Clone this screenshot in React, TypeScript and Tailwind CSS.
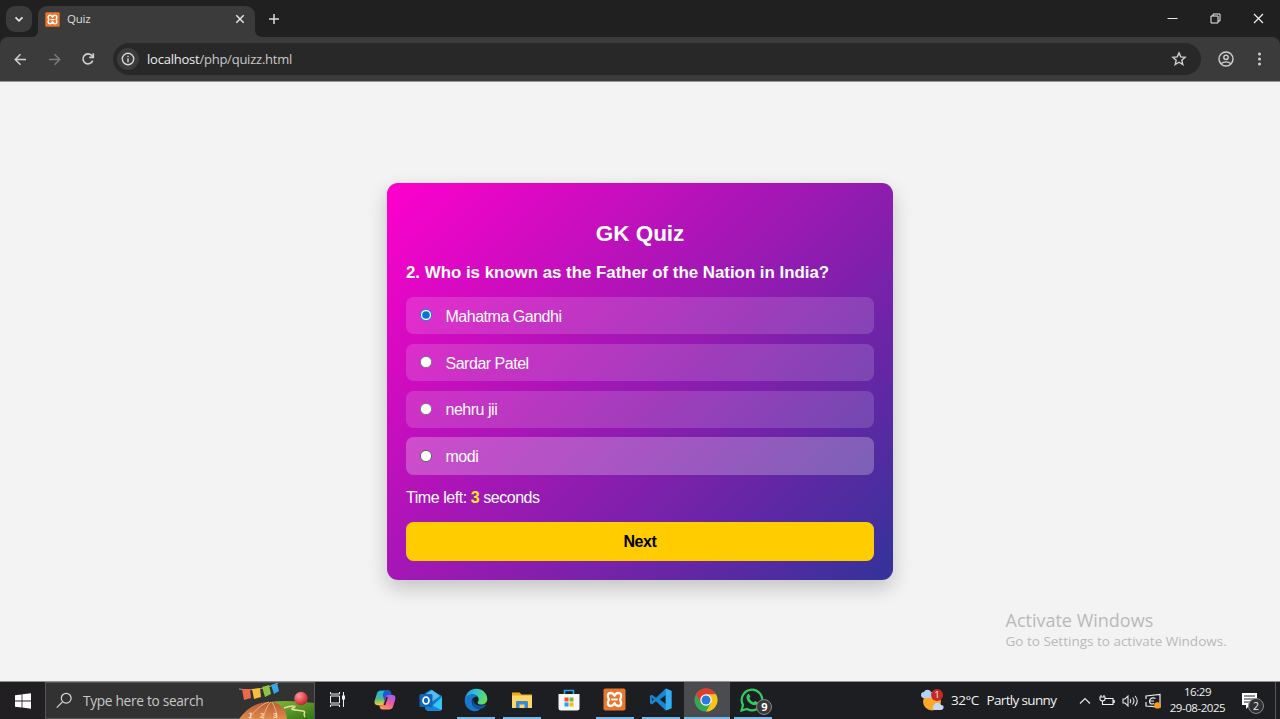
import React from "react";

const options = [
  { label: "Mahatma Gandhi", checked: true, hover: false },
  { label: "Sardar Patel", checked: false, hover: false },
  { label: "nehru jii", checked: false, hover: false },
  { label: "modi", checked: false, hover: true },
];

function Radio({ checked, hover }: { checked: boolean; hover: boolean }) {
  return (
    <svg className="-mt-px size-[14px] shrink-0" viewBox="0 0 14 14">
      {checked ? (
        <>
          <circle cx="7" cy="7" r="5.6" fill="#fff" stroke="#1c7fe0" strokeWidth="1" />
          <circle cx="7" cy="7" r="3.8" fill="#0075d8" />
        </>
      ) : (
        <circle cx="7" cy="7" r="5.6" fill="#fff" stroke={hover ? "#5a5a5a" : "#7c7480"} strokeWidth="0.9" />
      )}
    </svg>
  );
}

function Xampp({ className }: { className: string }) {
  return (
    <svg className={className} viewBox="0 0 24 24">
      <rect x="0.5" y="0.5" width="23" height="23" rx="2" fill="#e9762b" />
      <path
        d="M12 8.200C11 5.800 9.500 5.200 8 5.200 5 5.200 4 8 6.200 12 4 16 5 18.800 8 18.800c1.500 0 3-.6 4-3 1 2.400 2.500 3 4 3 3 0 4-2.800 1.800-6.800C20 8 19 5.200 16 5.200c-1.500 0-3 .6-4 3z"
        fill="none"
        stroke="#fff"
        strokeWidth="2.400"
        strokeLinejoin="round"
      />
      <path d="M9.500 12h5" stroke="#fff" strokeWidth="2" strokeLinecap="round" />
    </svg>
  );
}

function TabStrip() {
  return (
    <header className="flex h-[37px] bg-[#202020] text-[#dedede]">
      <div className="ml-[6px] mt-[6px] flex size-[26px] items-center justify-center rounded-[9px] bg-[#3b3b3b]">
        <svg className="size-[10px]" viewBox="0 0 10 10" fill="none" stroke="#e4e4e4" strokeWidth="1.7">
          <path d="M1.5 3.300 5 6.800 8.500 3.300" />
        </svg>
      </div>
      <div className="flex w-[234px]">
        <div className="w-[6px] self-end overflow-hidden bg-[#3b3b3b]">
          <div className="h-[8px] rounded-br-[7px] bg-[#202020]" />
        </div>
        <div className="mt-[6px] flex w-[217px] items-center rounded-t-[9px] bg-[#3b3b3b] pb-[5px] pl-[7px]">
          <Xampp className="size-[15px]" />
          <span className="ml-[7px] font-['Open_Sans',sans-serif] text-[11.5px] leading-[16px] tracking-[-0.2px]">Quiz</span>
          <svg className="ml-auto mr-[10px] size-[10px]" viewBox="0 0 10 10" fill="none" stroke="#e4e4e4" strokeWidth="1.500">
            <path d="M1.300 1.300l7.400 7.400M8.700 1.300 1.300 8.700" />
          </svg>
        </div>
        <div className="w-[8px] self-end bg-[#3b3b3b]">
          <div className="h-[8px] rounded-bl-[7px] bg-[#202020]" />
        </div>
      </div>
      <svg className="ml-[2px] mt-[13px] size-[12px]" viewBox="0 0 12 12" fill="none" stroke="#dcdcdc" strokeWidth="1.500">
        <path d="M6 1v10M1 6h10" />
      </svg>
      <div className="ml-auto mr-[16px] flex items-center gap-[32px]">
        <svg className="size-[11px]" viewBox="0 0 11 11" stroke="#e6e6e6">
          <path d="M.5 5.500h10" />
        </svg>
        <svg className="size-[11px]" viewBox="0 0 11 11" fill="none" stroke="#f0f0f0">
          <path d="M1 3h7v7H1zM3 3V1h7v7H8" />
        </svg>
        <svg className="size-[11px]" viewBox="0 0 11 11" stroke="#f0f0f0" strokeWidth="1.200">
          <path d="M1 1l9 9M10 1l-9 9" />
        </svg>
      </div>
    </header>
  );
}

function Toolbar() {
  return (
    <div className="bg-[#202020]">
      <div className="flex h-[44px] items-center rounded-t-[8px] bg-[#3b3b3b]">
        <svg className="ml-[14px] size-[13px]" viewBox="0 0 13 13" fill="none" stroke="#d2d2d2" strokeWidth="1.500">
          <path d="M12 6.500H1.500M6.500 1.300 1.300 6.500l5.200 5.200" />
        </svg>
        <svg className="ml-[21px] size-[13px]" viewBox="0 0 13 13" fill="none" stroke="#7b7b7b" strokeWidth="1.500">
          <path d="M1 6.500h10.500M6.500 1.300l5.200 5.200-5.200 5.200" />
        </svg>
        <svg className="ml-[20px] size-[14px]" viewBox="0 0 14 14" fill="none" stroke="#d2d2d2" strokeWidth="1.600">
          <path d="M11.700 8.600A5 5 0 1 1 10.800 3.600L12.300 5" />
          <path d="M12.300 1.200v4.200H8.200" />
        </svg>
        <div className="ml-[18px] flex h-[32px] w-[1088px] items-center rounded-full bg-[#282828]">
          <div className="ml-[4px] flex size-[22px] items-center justify-center rounded-full bg-[#3c3c3c]">
            <svg className="size-[14px]" viewBox="0 0 14 14" fill="none" stroke="#d8d8d8" strokeWidth="1.400">
              <circle cx="7" cy="7" r="5.700" />
              <path d="M7 6.300v3.900M7 3.700v1.400" />
            </svg>
          </div>
          <span className="ml-[8px] whitespace-nowrap font-['Open_Sans',sans-serif] text-[13px] leading-[18px] tracking-[-0.23px] text-[#c9c9c9]">
            <span className="text-[#ececec]">localhost</span>/php/quizz.html
          </span>
          <svg className="ml-auto mr-[14px] size-[16px]" viewBox="0 0 16 16" fill="none" stroke="#cfcfcf" strokeWidth="1.400">
            <path d="M8 1.900l1.800 4 4.300.4-3.300 2.900 1 4.300L8 11.200l-3.800 2.300 1-4.300L1.900 6.300l4.300-.4z" />
          </svg>
        </div>
        <svg className="ml-[17px] size-[16px]" viewBox="0 0 16 16" fill="none" stroke="#cfcfcf" strokeWidth="1.400">
          <circle cx="8" cy="8" r="7" />
          <circle cx="8" cy="6.300" r="2.200" />
          <path d="M3 12.700c2.900-2.500 7.100-2.500 10 0" />
        </svg>
        <svg className="ml-[17px] size-[16px]" viewBox="0 0 16 16" fill="#cfcfcf">
          <circle cx="8.500" cy="3" r="1.500" />
          <circle cx="8.500" cy="8" r="1.500" />
          <circle cx="8.500" cy="13" r="1.500" />
        </svg>
      </div>
    </div>
  );
}

function Quiz() {
  return (
    <section className="h-[396.500px] w-[506px] rounded-[11px] bg-[linear-gradient(135deg,#ff00cc,#333399)] px-[19px] pt-[36.400px] font-['Liberation_Sans',Arial,sans-serif] text-white shadow-[0_8px_20px_rgba(0,0,0,0.2)]">
      <h2 className="text-center text-[22.500px] font-bold leading-[27px]">GK Quiz</h2>
      <h3 className="mt-[15.600px] whitespace-nowrap text-[16.900px] font-bold leading-[22px] tracking-[-0.02px]">
        2. Who is known as the Father of the Nation in India?
      </h3>
      <div className="mt-[12.800px] flex flex-col gap-[9.400px]">
        {options.map((o) => (
          <label
            key={o.label}
            className={`flex h-[37.400px] items-center rounded-[7.500px] pl-[13px] ${o.hover ? "bg-white/25" : "bg-white/15"}`}
          >
            <Radio checked={o.checked} hover={o.hover} />
            <span className="ml-[12.500px] mt-[2px] text-[16px] leading-[20px] tracking-[-0.48px]">{o.label}</span>
          </label>
        ))}
      </div>
      <p className="mt-[13.500px] text-[16px] leading-[20px] tracking-[-0.45px]">
        Time left: <b className="text-[#ffee22]">3</b> seconds
      </p>
      <button className="mt-[13.500px] block h-[39.500px] w-full rounded-[7.500px] bg-[#ffcc00] text-[16px] font-bold tracking-[-0.4px] text-black">
        Next
      </button>
    </section>
  );
}

function TaskButton({ children, open, active }: { children: React.ReactNode; open?: boolean; active?: boolean }) {
  return (
    <div className={`flex h-full w-[46.100px] shrink-0 flex-col items-center ${active ? "bg-[#4a4c4f]" : ""}`}>
      <div className="flex h-[35px] items-center">{children}</div>
      {(open || active) && <div className={`h-[2px] bg-[#76b9ed] ${active ? "w-full" : "w-[38px]"}`} />}
    </div>
  );
}

function SearchArt() {
  return (
    <svg className="ml-auto h-[36px] w-[75px] shrink-0" viewBox="0 0 75 36">
      <defs>
        <linearGradient id="track" x1="0" y1="0" x2="0" y2="1">
          <stop offset="0" stopColor="#b85b32" />
          <stop offset="1" stopColor="#e08a4c" />
        </linearGradient>
        <radialGradient id="ball" cx=".35" cy=".3" r=".8">
          <stop offset="0" stopColor="#ff9a96" />
          <stop offset=".6" stopColor="#e04450" />
          <stop offset="1" stopColor="#a91d35" />
        </radialGradient>
        <linearGradient id="grass" x1="0" y1="0" x2="1" y2="1">
          <stop offset="0" stopColor="#8abb35" />
          <stop offset="1" stopColor="#2f7416" />
        </linearGradient>
      </defs>
      <path d="M30 19c14-2 30-1 45 1v16H36z" fill="url(#grass)" />
      <path d="M0 36C8 25 18 19 30 19c10 0 17 6 18 17z" fill="url(#track)" />
      <path d="M10 36C17 26 23 21 30 19M24 36c2-8 4-13 8-17M38 36c0-6-2-12-5-17" stroke="#f3c29a" strokeWidth=".8" fill="none" />
      <path d="M45 25c9-3 14-2 9 0s6 2 10 3-1 3 2 6" stroke="#e4dda5" strokeWidth="1.500" fill="none" />
      <g fill="#f7dcc2" fontFamily="Liberation Sans" fontSize="8" fontWeight="bold">
        <text x="9" y="35" transform="rotate(8 11 34)">1</text>
        <text x="21" y="35">2</text>
        <text x="34" y="35">3</text>
      </g>
      <path d="M0 6c13 2 27 0 39-6" stroke="#cfcfcf" strokeWidth=".7" fill="none" />
      <path d="M3 6l8 0 1 9-7 2z" fill="#ee6849" />
      <path d="M13 6l8-1 1 9-7 2z" fill="#f5bd38" />
      <path d="M23 4l7-2 2 9-6 3z" fill="#8bc541" />
      <path d="M32 2l6-2 2 8-5 3z" fill="#35a8e4" />
      <circle cx="62" cy="15.500" r="6.700" fill="url(#ball)" />
    </svg>
  );
}

function Taskbar() {
  return (
    <footer className="flex h-[37px] bg-[#1d1e22] font-['Open_Sans',sans-serif]">
      <div className="flex w-[45px] items-center justify-center bg-[#211f22]">
        <svg className="size-[16px]" viewBox="0 0 16 16" fill="#fff">
          <path d="M0 2.300 6.600 1.400v6.200H0zM7.400 1.300 16 .2v7.400H7.400zM0 8.400h6.600v6.200L0 13.700zM7.400 8.400H16v7.400l-8.600-1.200z" />
        </svg>
      </div>
      <div className="flex w-[270px] items-center border border-[#565656] bg-[#323232] text-[#c8c8c8]">
        <svg className="ml-[10px] size-[17px]" viewBox="0 0 17 17" fill="none" stroke="#d8d8d8" strokeWidth="1.200">
          <circle cx="10.200" cy="6.200" r="4.900" />
          <path d="M6.700 9.700.800 15.700" />
        </svg>
        <span className="ml-[10px] whitespace-nowrap text-[13.700px] leading-[18px] tracking-[-0.3px]">Type here to search</span>
        <SearchArt />
      </div>
      <div className="flex w-[461px]">
        <TaskButton>
          <svg className="mr-[2px] size-[17px]" viewBox="0 0 17 17" fill="none" stroke="#f0f0f0" strokeWidth="1">
            <path d="M1.500 5h9v7h-9zM1.500 1v2h9V1M1.500 16v-2h9v2M14.500 1v15" />
            <rect x="13.500" y="5" width="2" height="3" fill="#f0f0f0" />
          </svg>
        </TaskButton>
        <TaskButton>
          <svg className="ml-px size-[22px]" viewBox="0 0 22 22">
            <defs>
              <linearGradient id="cpa" x1="0" y1="0" x2="0" y2="1">
                <stop offset="0" stopColor="#1bb4f2" />
                <stop offset=".55" stopColor="#4ab98d" />
                <stop offset="1" stopColor="#f4d12c" />
              </linearGradient>
              <linearGradient id="cpb" x1=".7" y1="0" x2=".3" y2="1">
                <stop offset="0" stopColor="#a55cf0" />
                <stop offset=".5" stopColor="#eb5b9c" />
                <stop offset="1" stopColor="#ff9857" />
              </linearGradient>
            </defs>
            <path d="M7 1.500h7.300c1.500 0 2 .8 2.500 2l.7 2.500h-3c-1.500 0-2.200.8-2.700 2.500L10 14c-.5 1.500-1.300 2.200-2.600 2.200H3.500C.9 16.200 0 14 .8 11.300L3 4.300C3.600 2.500 5 1.500 7 1.500z" fill="url(#cpa)" />
            <path d="M10.500 1.500h3.800c1.500 0 2 .8 2.500 2l.7 2.500h-3c-1.500 0-2.200.8-2.700 2.500L10.500 12 8.700 6z" fill="#2158cf" />
            <path d="M15 20.500H8.500c-1.500 0-2.200-.8-2.600-2l-.7-2.300h2.200c1.300 0 2.100-.7 2.600-2.200l1.800-5.500C12.300 6.800 13 6 14.500 6h4c2.600 0 3.500 2 2.700 4.700L19 17.700c-.6 1.800-2 2.800-4 2.800z" fill="url(#cpb)" />
            <path d="M10.700 15.500 13 8.500" stroke="#1d1e22" strokeWidth="1.500" strokeLinecap="round" />
          </svg>
        </TaskButton>
        <TaskButton>
          <svg className="ml-px size-[24px]" viewBox="0 0 24 24">
            <path d="M12 1.500 23 8v12.500a2 2 0 0 1-2 2H8a2 2 0 0 1-2-2V5z" fill="#1477c8" />
            <path d="M7 6l6-4 8 6-11 8z" fill="#55bcf0" />
            <path d="M23 9v11.500a2 2 0 0 1-2 2H8z" fill="#31c8f3" />
            <path d="M7 14l15 8H8z" fill="#1682e0" />
            <rect x=".5" y="6" width="13" height="13" rx="1.500" fill="#0f67ba" />
            <ellipse cx="7" cy="12.500" rx="3" ry="3.500" fill="none" stroke="#fff" strokeWidth="1.700" />
          </svg>
        </TaskButton>
        <TaskButton open>
          <svg className="size-[24px]" viewBox="0 0 24 24">
            <defs>
              <linearGradient id="eda" x1="0" y1=".2" x2="1" y2=".5">
                <stop offset="0" stopColor="#1b9de0" />
                <stop offset=".5" stopColor="#32c6d4" />
                <stop offset="1" stopColor="#67dd52" />
              </linearGradient>
            </defs>
            <path d="M.8 11C2 4.500 6.500.7 12 .7c6.800 0 11.300 4.900 11.300 10.200 0 3.500-2.700 5.600-5.800 5.600-2.700 0-4-1-4-1.800 0-.6 1.200-1 1.200-3.200 0-2.700-2.600-4.900-6-4.900-3.300 0-6 1.600-7.900 4.400z" fill="url(#eda)" />
            <path d="M.7 12C1 8.800 4 6.600 8.700 6.600c2.200 0 4 .8 5 2C10 8 7.300 11 7.800 14.500c.5 4 4.200 6.700 8.200 6.500-1.300 1.300-3 2.300-5 2.300C5 23 .4 18 .7 12z" fill="#1878d0" />
            <path d="M9 11c-2.500 5.500 2 10.500 7.500 10 2.200-.4 4.300-1.700 5.600-3.900.2-.5-.1-.8-.6-.5-5 2.500-11 .5-12-3.100z" fill="#0c58a6" />
          </svg>
        </TaskButton>
        <TaskButton open>
          <svg className="size-[22px]" viewBox="0 0 22 22">
            <path d="M1 3.500h7.500l2 2H21V19H1z" fill="#e7ac21" />
            <path d="M1 6.500h20V19H1z" fill="#ffd568" />
            <path d="M5 19v-5.500c0-1 .5-1.500 1.500-1.500h9c1 0 1.500.5 1.500 1.500V19h-3.500v-3.500h-5V19z" fill="#398bd1" />
          </svg>
        </TaskButton>
        <TaskButton>
          <svg className="size-[24px]" viewBox="0 0 24 24">
            <path d="M7.500 7V2.500h9V7" fill="none" stroke="#25a9e2" strokeWidth="1.600" />
            <path d="M1.500 6h21v14a2.500 2.500 0 0 1-2.500 2.500H4A2.500 2.500 0 0 1 1.500 20z" fill="#f6f6f6" />
            <path d="M7.500 9.500h4v4h-4z" fill="#ee5131" />
            <path d="M12.500 9.500h4v4h-4z" fill="#79b530" />
            <path d="M7.500 14.500h4v4h-4z" fill="#22a4e6" />
            <path d="M12.500 14.500h4v4h-4z" fill="#f9b81b" />
          </svg>
        </TaskButton>
        <TaskButton open>
          <Xampp className="size-[23px]" />
        </TaskButton>
        <TaskButton open>
          <svg className="size-[23px]" viewBox="0 0 24 24">
            <path d="M17.500.5 23.500 3v18l-6 2.500L7.300 13.800 3 17.100 1 16V8l2-1 4.300 3.200zM3 10v4l2.200-2zM17.500 7.200 11.300 12l6.200 4.800z" fill="#1687d2" fillRule="evenodd" />
            <path d="M17.500.5 23.500 3v18l-6 2.500z" fill="#35adf2" />
          </svg>
        </TaskButton>
        <TaskButton active>
          <svg className="mr-px size-[24px]" viewBox="0 0 24 24">
            <circle cx="12" cy="12" r="11.500" fill="#34a853" />
            <path d="M2.040 6.250A11.500 11.500 0 0 1 21.960 6.250L12 6.500l-5.200 8.500z" fill="#e33b2e" />
            <path d="M21.960 6.250A11.500 11.500 0 0 1 12 23.500l5-8.500L12 6.250z" fill="#fbc116" />
            <circle cx="12" cy="12" r="5.750" fill="#fff" />
            <circle cx="12" cy="12" r="4.500" fill="#2878e8" />
          </svg>
        </TaskButton>
        <TaskButton open>
          <div className="relative mr-px">
            <svg className="size-[24px]" viewBox="0 0 24 24">
              <path d="M1.500 22.500 3 17A10.300 10.300 0 1 1 7 21z" fill="#1d1e22" stroke="#31cc60" strokeWidth="2.200" />
              <path d="M7.700 6.500c.7-.6 1.500-.5 1.800.2l.8 1.900c.2.5-.8 1.300-.9 1.700.8 1.900 2.200 3.200 4.100 4 .6.100 1.200-1.200 1.700-1.200l2.100 1c.7.300.4 1.500 0 2-1.400 1.600-3.500 1.300-5.500.4-2.700-1.200-5-3.900-5.300-6.400-.1-1.300.4-2.700 1.200-3.600z" fill="#31cc60" />
            </svg>
            <span className="absolute left-[16px] top-[11px] flex size-[16px] items-center justify-center rounded-full border border-[#888] bg-[#393939] text-[11px] font-bold leading-none text-white">
              9
            </span>
          </div>
        </TaskButton>
      </div>
      <div className="ml-auto flex items-center text-[#f0f0f0]">
        <div className="relative">
          <svg className="h-[24px] w-[26px]" viewBox="0 0 26 24">
            <circle cx="12" cy="12.500" r="9" fill="#fba928" />
            <path d="M4 9a3 3 0 0 1 0-6c1-3 6-3 7 0 4 0 4 6 0 6z" fill="#b5d1f5" />
            <path d="M14 21a3 3 0 0 1 0-5c1-3 6-3 7 0 4 0 3 5 0 5z" fill="#c5d9f5" />
          </svg>
          <span className="absolute left-[11px] top-0 flex size-[12px] items-center justify-center rounded-full bg-[#c42b24] text-[9px] leading-none text-white">1</span>
        </div>
        <span className="ml-[5px] w-[35.500px] whitespace-nowrap text-[13.500px] tracking-[-0.5px]">32°C</span>
        <span className="w-[92.500px] whitespace-nowrap text-[13.500px] tracking-[-0.65px]">Partly sunny</span>
        <svg className="h-[8px] w-[12px]" viewBox="0 0 12 8" fill="none" stroke="#e5e5e5" strokeWidth="1.200">
          <path d="M1 6.500l5-5 5 5" />
        </svg>
        <svg className="ml-[8px] h-[12px] w-[17px]" viewBox="0 0 17 12" fill="none" stroke="#efefef" strokeWidth="1.100">
          <path d="M6.500 3.500h7.500v6H5M14 5.500h1.200v2H14M1 2h5v2c0 2.500-5 2.500-5 0zM2 0v2M5 0v2M3.500 6v3.500H5" />
        </svg>
        <svg className="ml-[6px] h-[14px] w-[17px]" viewBox="0 0 17 14" fill="none" stroke="#e5e5e5" strokeWidth="1.100">
          <path d="M1 5h2l3-3v10L3 9H1zM8 5q1.500 2 0 4M10.500 3.500q3 3.500 0 7M13 2q4.500 5 0 10" />
        </svg>
        <svg className="ml-[6px] h-[16px] w-[16px]" viewBox="0 0 16 16" fill="none" stroke="#ececec" strokeWidth="1.200">
          <path d="M1 6V3l14-1.500V14L1 13V9" />
          <path d="M10.500 5.500C6.500 4 4.500 6 4.500 8.500s2.500 3 4.500 2M4.500 8H9" />
          <circle cx="12.400" cy="12.400" r="3.200" fill="#fb9b17" stroke="none" />
        </svg>
        <div className="ml-[8px] w-[57px] text-center text-[11.500px] leading-[16px] tracking-[-0.45px]">
          <div className="-mt-px">16:29</div>
          <div className="whitespace-nowrap">29-08-2025</div>
        </div>
        <div className="relative ml-[15px] mr-[10px] h-[37px] w-[24px]">
          <svg className="mt-[10px] size-[17px]" viewBox="0 0 17 17">
            <path d="M1 1h15v12H9l-4 4v-4H1z" fill="#fff" />
            <path d="M3 4h11M3 7h11M3 10h8" stroke="#242428" />
          </svg>
          <span className="absolute left-[7px] top-[16px] flex size-[16px] items-center justify-center rounded-full border border-[#8a8a8a] bg-[#303033] text-[10.500px] leading-none">2</span>
        </div>
        <div className="mr-[4px] h-[37px] w-px bg-[#57575a]" />
      </div>
    </footer>
  );
}

export default function App() {
  return (
    <div className="flex h-[719px] w-[1280px] flex-col overflow-hidden bg-[#f3f3f3]">
      <TabStrip />
      <Toolbar />
      <main className="relative flex h-[601px] items-center justify-center border-y border-t-[#969696] border-b-[#909090] bg-[#f3f3f3]">
        <Quiz />
        <div className="absolute left-[1005.500px] top-[526px] whitespace-nowrap font-['Open_Sans',sans-serif] text-[#b9b9b9]">
          <div className="text-[18px] leading-[24px]">Activate Windows</div>
          <div className="text-[13.500px] leading-[19px]">Go to Settings to activate Windows.</div>
        </div>
      </main>
      <Taskbar />
    </div>
  );
}
